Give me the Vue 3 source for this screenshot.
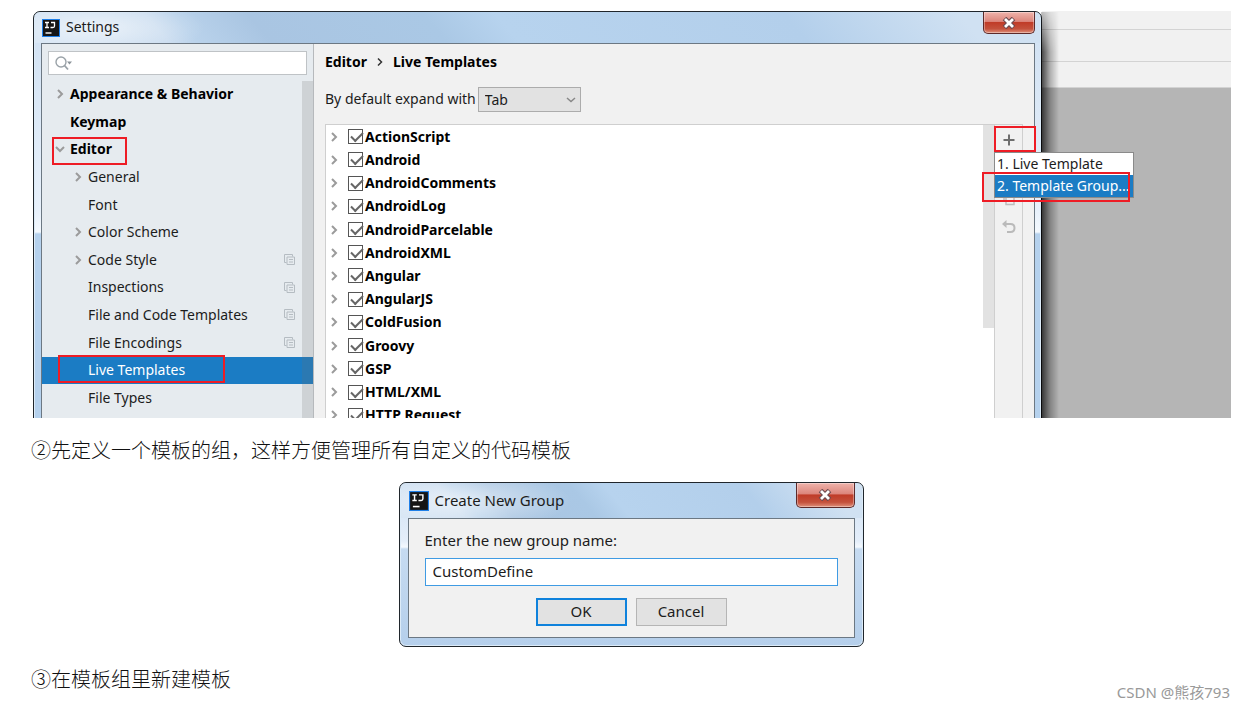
<script setup>
import { ref } from "vue";

const settings = [
  { label: "Appearance & Behavior", level: 0, arrow: "right" },
  { label: "Keymap", level: 0 },
  { label: "Editor", level: 0, arrow: "down", marked: true },
  { label: "General", level: 1, arrow: "right" },
  { label: "Font", level: 1 },
  { label: "Color Scheme", level: 1, arrow: "right" },
  { label: "Code Style", level: 1, arrow: "right", project: true },
  { label: "Inspections", level: 1, project: true },
  { label: "File and Code Templates", level: 1, project: true },
  { label: "File Encodings", level: 1, project: true },
  { label: "Live Templates", level: 1, selected: true },
  { label: "File Types", level: 1 },
];

const templates = ref(
  [
    "ActionScript",
    "Android",
    "AndroidComments",
    "AndroidLog",
    "AndroidParcelable",
    "AndroidXML",
    "Angular",
    "AngularJS",
    "ColdFusion",
    "Groovy",
    "GSP",
    "HTML/XML",
    "HTTP Request",
  ].map((name) => ({ name, enabled: true }))
);

const query = ref("");
const expandKey = ref("Tab");
const groupName = ref("CustomDefine");
</script>

<template>
  <main class="article">
    <figure class="shot">
      <section class="window settings" aria-label="Settings">
        <header class="titlebar">
          <svg class="logo" viewBox="0 0 18 18" aria-hidden="true">
            <rect width="18" height="18" fill="#1e7fe8" />
            <rect x="1" y="1" width="16" height="16" fill="#151515" />
            <path d="M3 3.500h4M5 3.500v5M3 8.500h4M9 3.500h3.500v3.500q0 1.500-1.500 1.500H8.500" fill="none" stroke="#fff" stroke-width="1.300" />
            <path d="M3.500 14h6" stroke="#fff" stroke-width="1.400" />
          </svg>
          <span class="title">Settings</span>
          <button class="close" type="button" aria-label="Close settings">
            <svg viewBox="0 0 14 12" aria-hidden="true">
              <path d="M2.500 1.500l9 9M11.500 1.500l-9 9" stroke="#6b4a50" stroke-width="5" />
              <path d="M3 2l8 8M11 2l-8 8" stroke="#fff" stroke-width="2.800" />
            </svg>
          </button>
        </header>

        <div class="body settings-body">
          <aside class="sidebar">
            <div class="search">
              <svg viewBox="0 0 20 16" aria-hidden="true">
                <circle cx="7" cy="7" r="5" fill="none" stroke="#9aa2a8" stroke-width="1.400" />
                <path d="M10.500 10.500l3.500 4" stroke="#9aa2a8" stroke-width="1.800" />
                <path d="M13 6.500h5l-2.500 3z" fill="#8b9399" />
              </svg>
              <input v-model="query" type="text" aria-label="Search settings" />
            </div>
            <div class="nav-wrap">
              <ul class="nav">
                <li
                  v-for="item in settings"
                  :key="item.label"
                  :class="['nav-item', `level-${item.level}`, { selected: item.selected }]"
                >
                  <span class="arrow">
                    <svg v-if="item.arrow" :class="item.arrow" viewBox="0 0 8 10" aria-hidden="true">
                      <path d="M2 1l4 4-4 4" />
                    </svg>
                  </span>
                  <span>{{ item.label }}</span>
                  <svg v-if="item.project" class="project" viewBox="0 0 11 11" aria-hidden="true">
                    <path d="M2.500 8.500h-2v-8h8v2M3 3h7.500v7.500H3zM5 5.500h4M5 8h4" />
                  </svg>
                  <i v-if="item.marked" class="mark mark-editor" />
                  <i v-if="item.selected" class="mark mark-live" />
                </li>
              </ul>
              <div class="nav-scroll" />
            </div>
          </aside>

          <div class="pane">
            <div class="crumbs">
              <span>Editor</span>
              <svg viewBox="0 0 6 10" aria-hidden="true"><path d="M1 1.500L4.500 5 1 8.500" /></svg>
              <span>Live Templates</span>
            </div>
            <div class="expand">
              <label for="expand-key">By default expand with</label>
              <div class="select">
                <select id="expand-key" v-model="expandKey">
                  <option>Tab</option>
                  <option>Enter</option>
                  <option>Space</option>
                </select>
                <svg viewBox="0 0 10 6" aria-hidden="true"><path d="M1 1l4 3.500L9 1" /></svg>
              </div>
            </div>
            <div class="panel">
              <ul class="templates">
                <li v-for="t in templates" :key="t.name">
                  <svg class="right" viewBox="0 0 8 10" aria-hidden="true"><path d="M2 1l4 4-4 4" /></svg>
                  <label><input v-model="t.enabled" type="checkbox" />{{ t.name }}</label>
                </li>
              </ul>
              <div class="panel-scroll" />
              <div class="tools">
                <button type="button" aria-label="Add">
                  <svg viewBox="0 0 16 16" aria-hidden="true"><path d="M8 2.500v11M2.500 8h11" stroke="#6e6e6e" stroke-width="2" /></svg>
                </button>
                <button type="button" aria-label="Remove">
                  <svg viewBox="0 0 16 16" aria-hidden="true"><path d="M3 8h10" stroke="#bdbdbd" stroke-width="2" /></svg>
                </button>
                <button type="button" aria-label="Duplicate">
                  <svg viewBox="0 0 16 16" aria-hidden="true"><path d="M5 6h8v8.500H5zM3 10V3h8" fill="none" stroke="#bdbdbd" stroke-width="1.500" /></svg>
                </button>
                <button type="button" aria-label="Restore defaults">
                  <svg viewBox="0 0 16 16" aria-hidden="true">
                    <path d="M4 5h5.500q4 0 4 4t-4 4H6" fill="none" stroke="#bababa" stroke-width="2" />
                    <path d="M1 5l4.500-4v8z" fill="#bababa" />
                  </svg>
                </button>
                <i class="mark mark-add" />
                <div class="popup" role="menu">
                  <button type="button" role="menuitem">1. Live Template</button>
                  <button class="active" type="button" role="menuitem">2. Template Group...</button>
                  <i class="mark mark-group" />
                </div>
              </div>
            </div>
          </div>
        </div>
      </section>
      <div class="backdrop">
        <div class="bar bar-top" />
        <div class="bar bar-mid" />
        <div class="bar bar-low" />
      </div>
    </figure>

    <p>②先定义一个模板的组，这样方便管理所有自定义的代码模板</p>

    <form class="window group" aria-label="Create New Group" @submit.prevent>
      <header class="titlebar">
        <svg class="logo" viewBox="0 0 18 18" aria-hidden="true">
          <rect width="18" height="18" fill="#1e7fe8" />
          <rect x="1" y="1" width="16" height="16" fill="#151515" />
          <path d="M3 3.500h4M5 3.500v5M3 8.500h4M9 3.500h3.500v3.500q0 1.500-1.500 1.500H8.500" fill="none" stroke="#fff" stroke-width="1.300" />
          <path d="M3.500 14h6" stroke="#fff" stroke-width="1.400" />
        </svg>
        <span class="title">Create New Group</span>
        <button class="close" type="button" aria-label="Close dialog">
          <svg viewBox="0 0 14 12" aria-hidden="true">
            <path d="M2.500 1.500l9 9M11.500 1.500l-9 9" stroke="#6b4a50" stroke-width="5" />
            <path d="M3 2l8 8M11 2l-8 8" stroke="#fff" stroke-width="2.800" />
          </svg>
        </button>
      </header>
      <div class="body group-body">
        <label for="group-name">Enter the new group name:</label>
        <input id="group-name" v-model="groupName" type="text" />
        <div class="actions">
          <button class="primary" type="submit">OK</button>
          <button type="button">Cancel</button>
        </div>
      </div>
    </form>

    <p>③在模板组里新建模板</p>
    <footer class="watermark">CSDN @熊孩793</footer>
  </main>
</template>

<style>
body {
  margin: 0;
  background: #fff;
}
</style>

<style scoped>
* {
  box-sizing: border-box;
}

.article {
  position: relative;
  padding: 11px 13px 0 31px;
  font-family: "Noto Sans", "Noto Sans CJK SC", sans-serif;
  font-size: 14px;
  line-height: 20px;
  color: #1c1c1c;
}

button,
input,
select {
  font: inherit;
  color: inherit;
  margin: 0;
  padding: 0;
  border: 0;
  border-radius: 0;
  outline: 0;
}

ul {
  list-style: none;
  margin: 0;
  padding: 0;
}

p {
  margin: 0;
  padding: 16px 0;
  font-family: "Noto Sans CJK SC", sans-serif;
  font-size: 20px;
  font-weight: 300;
  line-height: 32px;
  color: #111;
}

/* the dialog runs on below the bottom edge of the shot */
.shot {
  display: grid;
  grid-template-columns: minmax(0, 1fr) 189px;
  height: 407px;
  margin: 0 0 0 2px;
  overflow: hidden;
}

.window {
  position: relative;
  border: 1px solid #20262c;
  border-radius: 7px;
  box-shadow: inset 0 0 0 1px #dcebf8;
}

.settings {
  z-index: 1;
  padding: 0 6px 7px 7px;
  background: linear-gradient(#cfe0f2 0, #e8f1fb 200px, #f4f9fe 220px, #b5d1ed 222px, #b5d1ed 100%);
}

.settings::after {
  content: "";
  position: absolute;
  top: 0;
  bottom: 0;
  left: 100%;
  width: 18px;
  background: linear-gradient(90deg, rgba(0, 0, 0, 0.75), rgba(0, 0, 0, 0.28) 50%, transparent);
  mask-image: linear-gradient(rgba(0, 0, 0, 0.3), #000 40px);
}

.titlebar {
  display: flex;
  align-items: center;
  gap: 6px;
  height: 31px;
  margin: 0 -5px 0 -6px;
  padding: 0 5px 0 7px;
  border-radius: 6px 6px 0 0;
  background:
    radial-gradient(ellipse 110px 30px at 60px 50%, rgba(255, 255, 255, 0.6), transparent),
    linear-gradient(50deg, #d3e3f3 0, #c8dbef 13%, #b9d2eb 16%, #a9c5e2 23%, #aac8e5 40%, #b7d3ee 47%, #b3cfeb 75%, #d0e1f2 92%);
}

.title {
  padding-bottom: 1px;
}

.logo {
  width: 18px;
  height: 18px;
}

.close {
  display: flex;
  justify-content: center;
  align-items: center;
  align-self: flex-start;
  width: 52px;
  height: 22px;
  margin-left: auto;
  border: 1px solid #5d2a2a;
  border-top: 0;
  border-radius: 0 0 5px 5px;
  background: linear-gradient(#efb3ab, #dc867c 45%, #c03c28 50%, #c4513c 80%, #e0917c);
  box-shadow: inset 0 0 0 1px rgba(255, 255, 255, 0.35);
}

.close svg {
  width: 14px;
  height: 12px;
}

.body {
  border: 1px solid #6c7883;
  background: #f1f1f1;
}

.settings-body {
  display: grid;
  grid-template-columns: 272px minmax(0, 1fr);
}

.sidebar {
  border-right: 1px solid #b6b9bc;
  background: #e6ebef;
}

.search {
  display: flex;
  align-items: center;
  height: 24px;
  margin: 7px 6px 6px;
  padding: 0 5px;
  border: 1px solid #bfc3c6;
  background: #fff;
}

.search svg {
  flex: none;
  width: 20px;
  height: 16px;
}

.search input {
  flex: 1;
  min-width: 0;
  background: transparent;
}

.nav-wrap {
  position: relative;
  padding-bottom: 16px;
}

.nav {
  display: grid;
  grid-template-rows: repeat(12, 1fr);
  height: 331px;
}

.nav-item {
  position: relative;
  display: flex;
  align-items: center;
  padding: 0 18px 1px 14px;
}

.level-0 {
  font-weight: 700;
  color: #000;
}

.level-1 {
  padding-left: 32px;
}

.nav-item.selected {
  background: #1b7cc4;
  color: #fff;
}

.nav-scroll {
  position: absolute;
  top: 0;
  right: 0;
  bottom: 0;
  width: 11px;
  background: rgba(110, 110, 110, 0.2);
}

.arrow {
  display: flex;
  width: 14px;
}

.right,
.down {
  width: 8px;
  height: 10px;
  fill: none;
  stroke: #9b9b9b;
  stroke-width: 2;
}

.down {
  transform: rotate(90deg);
}

.project {
  width: 11px;
  height: 11px;
  margin-left: auto;
  fill: none;
  stroke: #b5bcc2;
}

.mark {
  position: absolute;
  border: 2px solid #ee1c25;
  pointer-events: none;
}

.mark-editor {
  top: 1px;
  left: 10px;
  width: 75px;
  height: 28px;
}

.mark-live {
  top: -2px;
  left: 16px;
  width: 167px;
  height: 28px;
}

.pane {
  padding: 8px 11px 0;
}

.crumbs {
  display: flex;
  align-items: center;
  gap: 10px;
  font-weight: 700;
  color: #000;
}

.crumbs svg {
  width: 6px;
  height: 10px;
  fill: none;
  stroke: #333;
  stroke-width: 1.500;
}

.expand {
  display: flex;
  align-items: center;
  gap: 2px;
  margin: 15px 0 12px;
}

.expand label {
  padding-bottom: 1px;
}

.select {
  position: relative;
  width: 103px;
}

.select select {
  display: block;
  width: 100%;
  height: 25px;
  padding: 0 6px;
  appearance: none;
  border: 1px solid #acacac;
  background: #e2e2e2;
}

.select svg {
  position: absolute;
  top: 10px;
  right: 5px;
  width: 10px;
  height: 6px;
  fill: none;
  stroke: #888;
  stroke-width: 1.500;
  pointer-events: none;
}

.panel {
  display: grid;
  grid-template-columns: minmax(0, 1fr) 11px 29px;
  border: 1px solid #cfcfcf;
  border-right: 0;
  background: #fff;
}

.templates {
  display: grid;
  grid-template-rows: repeat(13, 1fr);
  height: 302px;
}

.templates li {
  display: flex;
  align-items: center;
  gap: 10px;
  padding-left: 4px;
  font-weight: 700;
  color: #000;
}

.templates label {
  display: flex;
  align-items: center;
  gap: 2px;
}

.templates input {
  position: relative;
  width: 15px;
  height: 15px;
  appearance: none;
  border: 1px solid #555;
  background: #fff;
}

.templates input:checked::before {
  content: "";
  position: absolute;
  top: 2px;
  left: 2px;
  width: 10px;
  height: 5px;
  border: solid #666;
  border-width: 0 0 2px 2px;
  transform: rotate(-45deg);
}

.panel-scroll {
  height: 203px;
  background: #e2e2e2;
}

.tools {
  position: relative;
  display: flex;
  flex-direction: column;
  border: solid #cfcfcf;
  border-width: 0 1px;
  background: #f1f1f1;
}

.tools > button {
  display: flex;
  justify-content: center;
  align-items: center;
  height: 29px;
  background: none;
}

.tools > button svg {
  width: 16px;
  height: 16px;
}

.mark-add {
  top: 1px;
  left: -1px;
  width: 42px;
  height: 26px;
}

.popup {
  position: absolute;
  top: 27px;
  left: -1px;
  z-index: 2;
  width: 140px;
  border: 1px solid #8a8a8a;
  background: #fff;
}

.popup button {
  display: block;
  width: 100%;
  height: 22px;
  padding-left: 2px;
  text-align: left;
  white-space: nowrap;
  background: none;
}

.popup .active {
  background: #1b7cc4;
  color: #fff;
}

.mark-group {
  top: 19px;
  left: -13px;
  width: 148px;
  height: 30px;
}

.backdrop {
  background: #b5b5b5;
}

.bar {
  border-bottom: 1px solid #d3d3d3;
  background: #f1f1f1;
}

.bar-top {
  height: 19px;
}

.bar-mid {
  height: 32px;
}

.bar-low {
  height: 26px;
}

.group {
  width: 465px;
  margin: 0 auto;
  padding: 0 8px 8px;
  font-size: 15px;
  background: linear-gradient(#cfe0f2 0, #e4eefa 58px, #f4f9fe 64px, #c6dbf1 66px, #b5cfeb 100%);
}

.group .titlebar {
  height: 35px;
  margin: 0 -7px;
  padding: 0 7px 0 8px;
}

.group .logo {
  width: 20px;
  height: 20px;
}

.group .close {
  width: 59px;
  height: 25px;
}

.group-body {
  padding: 11px 16px;
}

.group-body label {
  display: block;
}

.group-body input {
  display: block;
  width: 100%;
  height: 28px;
  margin: 8px 0 12px;
  padding: 0 7px 2px;
  border: 1px solid #3f9be3;
  background: #fff;
}

.actions {
  display: flex;
  justify-content: center;
  gap: 9px;
}

.actions button {
  width: 91px;
  height: 28px;
  padding-bottom: 2px;
  border: 1px solid #b5b5b5;
  background: #e2e2e2;
}

.actions .primary {
  border: 2px solid #0f82dc;
}

.watermark {
  position: absolute;
  right: 14px;
  bottom: 9px;
  font-size: 15px;
  color: #999;
}
</style>
